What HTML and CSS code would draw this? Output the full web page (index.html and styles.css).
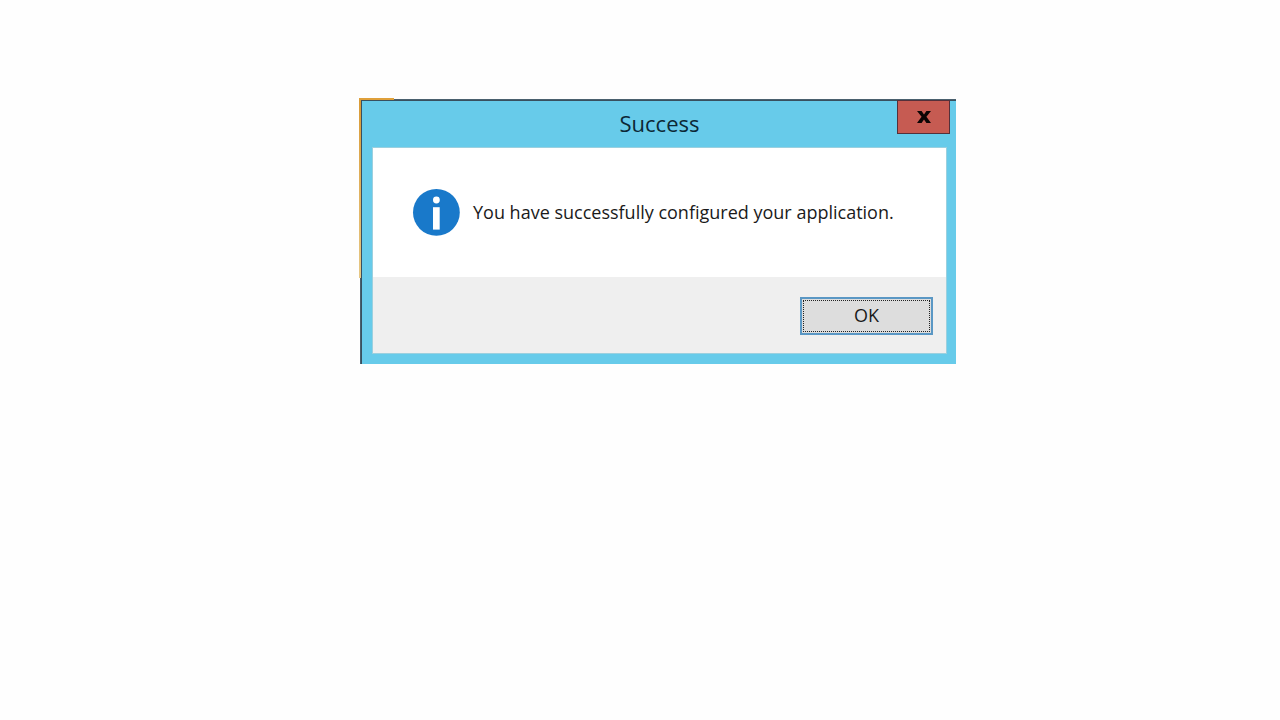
FILE: index.html
```
<!DOCTYPE html>
<html lang="en">
<head>
    <meta charset="UTF-8">
    <meta name="viewport" content="width=device-width, initial-scale=1.0">
    <title>Success</title>
    <link rel="stylesheet" href="styles.css">
</head>
<body>
    <main class="backdrop">
        <div class="dialog" role="alertdialog" aria-labelledby="dialog-title" aria-describedby="dialog-message">
            <header class="title-bar">
                <h1 class="title" id="dialog-title">Success</h1>
                <button class="close-button" type="button" aria-label="Close">
                    <svg width="14" height="14" viewBox="0 0 14 14" aria-hidden="true">
                        <path d="M0 1h4.6L7 4.4 9.4 1H14L9.4 6.8 14 13H9.4L7 9.4 4.6 13H0l4.6-6.2z" fill="#0c0505"/>
                    </svg>
                </button>
            </header>
            <div class="content">
                <div class="message">
                    <svg class="info-icon" width="48" height="48" viewBox="0 0 48 48" aria-hidden="true">
                        <circle cx="24.4" cy="24.4" r="23.4" fill="#1979ca"/>
                        <circle cx="24.4" cy="12" r="3.4" fill="#fff"/>
                        <path d="M21 19.2h6.7v22.4H21z" fill="#fff"/>
                    </svg>
                    <p class="message-text" id="dialog-message">You have successfully configured your application.</p>
                </div>
                <footer class="actions">
                    <button class="ok-button" type="button"><span class="ok-label">OK</span></button>
                </footer>
            </div>
        </div>
    </main>
</body>
</html>
```
FILE: styles.css
```
body {
    margin: 0;
    background: #fefefe;
    color: #1a1a1a;
    font-family: "Open Sans", "Noto Sans", sans-serif;
}
/* edge of the window behind shows at the top left */
.backdrop {
    box-sizing: border-box;
    max-width: 597px;
    margin: 98px 0 0 359px;
    padding: 2px 0 0 2px;
    background:
        linear-gradient(#dfa03a, #dfa03a) 0 0 / 35px 2px no-repeat,
        linear-gradient(#d99a35, #e6c886) 0 0 / 2px 180px no-repeat,
        linear-gradient(#4a606e, #4a606e) 35px 1px / 100% 1px no-repeat,
        linear-gradient(#4a606e, #4a606e) 1px 180px / 1px 100% no-repeat;
}
.dialog {
    box-sizing: border-box;
    padding: 0 9px 10px 10px;
    border-top: 1px solid #38505f;
    border-left: 1px solid #38505f;
    background: #67cbea;
}
.title-bar {
    display: flex;
    justify-content: center;
    position: relative;
    height: 46px;
}
.title {
    margin: 0;
    font-size: 22px;
    font-weight: 400;
    line-height: 44px;
    color: #0c2836;
}
.close-button {
    display: flex;
    align-items: center;
    justify-content: center;
    position: absolute;
    top: -1px;
    right: -3px;
    width: 53px;
    height: 34px;
    padding: 0;
    border: 1px solid #54303a;
    background: #c65b52;
}
.content {
    border: 1px solid #9bd0df;
    background: #fff;
}
.message {
    display: flex;
    align-items: center;
    gap: 13px;
    padding: 40px 39px 41px;
}
.info-icon {
    flex: none;
}
.message-text {
    margin: 0;
    font-size: 18px;
    line-height: 24px;
}
.actions {
    display: flex;
    justify-content: flex-end;
    padding: 20px 13px 18px;
    background: #efefef;
}
.ok-button {
    width: 133px;
    height: 38px;
    padding: 1px;
    border: 2px solid #5a97c4;
    background: #ddd;
    color: #1a1a1a;
    font-family: inherit;
    font-size: 18px;
}
.ok-label {
    display: block;
    padding-bottom: 2px;
    border: 1px dotted #222;
    line-height: 28px;
}
```
